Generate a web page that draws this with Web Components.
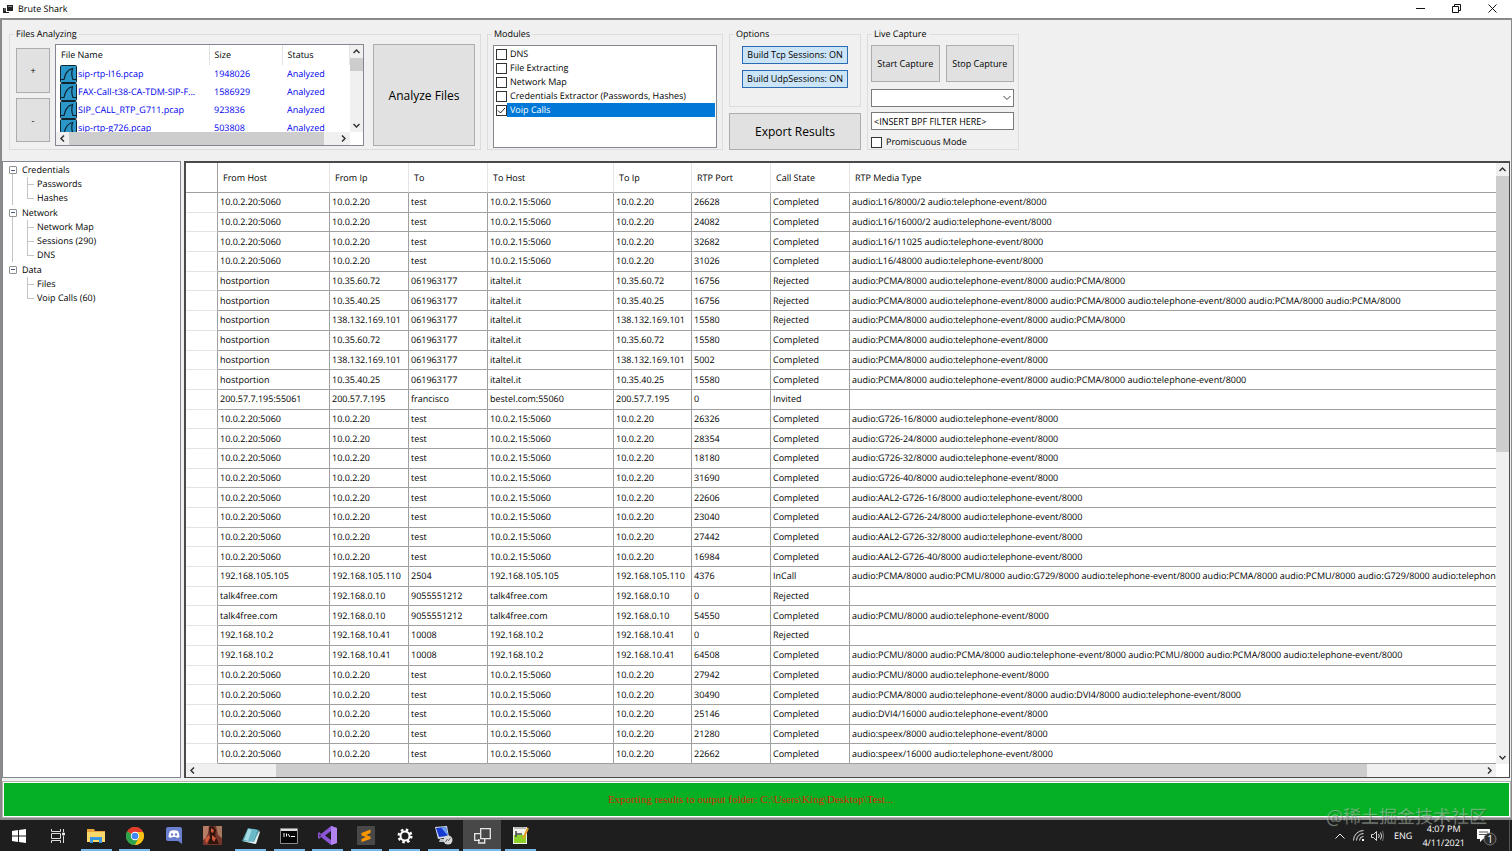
<!DOCTYPE html>
<html lang="en">
<head>
<meta charset="utf-8">
<title>Brute Shark</title>
<style>
  html, body { margin: 0; height: 100%; }
  body {
    font: 9px/14px "Open Sans", "Noto Sans", "Noto Sans CJK SC", sans-serif;
    color: #000; background: #fff; text-rendering: geometricPrecision;
  }
</style>
</head>
<body>
<bs-app></bs-app>
<script>
const base = `*, *::before, *::after { box-sizing: border-box; }
  button, input, select { font: inherit; color: inherit; margin: 0; border-radius: 0; }
  button { padding: 0; background: #e1e1e1; border: 1px solid #adadad; }
  input[type=checkbox] { appearance: none; flex: none; width: 11px; height: 11px; border: 1px solid #333; background: #fff; }
  input[type=checkbox]:checked { background: #fff url("data:image/svg+xml,%3Csvg xmlns='http://www.w3.org/2000/svg' viewBox='0 0 9 9'%3E%3Cpath d='M1 4.5 3.5 7 8 2' fill='none' stroke='%23222'/%3E%3C/svg%3E"); }`;

function define(name, markup, setup) {
  const template = document.createElement('template');
  template.innerHTML = markup.replace('<style>', '<style>' + base);
  customElements.define(name, class extends HTMLElement {
    constructor() {
      super();
      this.attachShadow({ mode: 'open' }).append(template.content.cloneNode(true));
    }
    connectedCallback() { if (setup && !this.ready) { this.ready = true; setup(this, this.shadowRoot); } }
  });
}

define('bs-title-bar', `<style>
  :host { display: flex; align-items: center; height: 18px; padding: 0 2px 0 3px; background: #fff; color: #000; }
  .name { margin-left: 5px; flex: 1; }
  button { width: 36px; height: 16px; border: 0; background: none; display: grid; place-items: center; }
  .buttons { display: flex; align-self: flex-start; }
</style>
<svg width="10" height="9" viewBox="0 0 10 9"><path d="M4 0h6v6H4z" fill="#222"/><path d="M0 3h3v4h3v1H0z" fill="#222"/><path d="M1 3h2v3H1z" fill="#555"/><path d="M5 1h4v1H5z" fill="#888"/></svg>
<span class="name">Brute Shark</span>
<div class="buttons">
<button aria-label="Minimize"><svg width="9" height="9"><path d="M0 4.5h9" stroke="#111"/></svg></button>
<button aria-label="Restore"><svg width="9" height="9" fill="none" stroke="#111"><path d="M.5 2.5h6v6h-6zM2.500 2.500V.5h6v6H6.500"/></svg></button>
<button aria-label="Close"><svg width="9" height="9" stroke="#111"><path d="M.5.5l8 8M8.500.5l-8 8"/></svg></button></div>`);

define('bs-group', `<style>
  :host { display: block; }
  fieldset { margin: 0; padding: 0; border: 1px solid #dcdcdc; min-width: 0; height: 100%; }
  legend { margin-left: 4px; padding: 0 2px; line-height: 14px; }
</style>
<fieldset><legend></legend><slot></slot></fieldset>`, (el, root) => {
  root.querySelector('legend').textContent = el.getAttribute('label');
});

define('bs-scrollbar', `<style>
  :host { display: flex; background: #f0f0f0; }
  :host([vertical]) { flex-direction: column; }
  button { flex: none; width: 13px; height: 13px; border: 0; background: none; display: grid; place-items: center; }
  .thumb { background: #cdcdcd; }
  .before, .thumb, .after { flex-basis: 0; }
</style>
<button aria-label="Back"><svg width="7" height="7" fill="none" stroke="#333" stroke-width="1.500"><path/></svg></button>
<span class="before"></span><span class="thumb"></span><span class="after"></span>
<button aria-label="Forward"><svg width="7" height="7" fill="none" stroke="#333" stroke-width="1.500"><path/></svg></button>`, (el, root) => {
  const start = +el.getAttribute('start'), size = +el.getAttribute('size');
  root.querySelector('.before').style.flexGrow = start;
  root.querySelector('.thumb').style.flexGrow = size;
  root.querySelector('.after').style.flexGrow = 100 - start - size;
  const shapes = el.hasAttribute('vertical') ? ['M.5 5 3.500 2 6.500 5', 'M.5 2 3.500 5 6.500 2'] : ['M5 .5 2 3.500 5 6.500', 'M2 .5 5 3.500 2 6.500'];
  root.querySelectorAll('path').forEach((p, i) => p.setAttribute('d', shapes[i]));
});

define('bs-file-list', `<style>
  :host { display: grid; grid-template: minmax(0, 1fr) 13px / minmax(0, 1fr) 13px; border: 1px solid #828790; background: #fff; }
  .view { overflow: hidden; }
  table { border-collapse: collapse; table-layout: fixed; width: 100%; color: #0000f0; }
  th, td { padding: 0 0 0 5px; text-align: left; font-weight: 400; white-space: nowrap; overflow: hidden; text-overflow: ellipsis; }
  th { height: 20px; color: #000; border-right: 1px solid #e3e3e3; }
  th:first-child { width: 153px; } th:nth-child(2) { width: 73px; }
  td { height: 18px; }
  td:first-child { padding-left: 4px; }
  .file { display: flex; align-items: center; gap: 1px; }
  .file span { overflow: hidden; text-overflow: ellipsis; }
  svg { flex: none; }
</style>
<div class="view"><table><thead><tr><th>File Name</th><th>Size</th><th>Status</th></tr></thead><tbody></tbody></table></div>
<bs-scrollbar vertical start="0" size="22"></bs-scrollbar>
<bs-scrollbar start="0" size="95"></bs-scrollbar>`, (el, root) => {
  const files = [['sip-rtp-l16.pcap', 1948026], ['FAX-Call-t38-CA-TDM-SIP-F...', 1586929], ['SIP_CALL_RTP_G711.pcap', 923836], ['sip-rtp-g726.pcap', 503808]];
  root.querySelector('tbody').innerHTML = files.map(([name, size]) => `<tr><td><div class="file"><svg width="17" height="18" viewBox="0 0 17 18"><rect x=".5" y=".5" width="16" height="17" rx="1" fill="#2b96c8" stroke="#12242e"/><path d="M1 14.500h3C5 9 8 4.500 12.500 3.500c-.8 3-.8 8 .5 11h3" fill="none" stroke="#0c2231" stroke-width="1.200"/></svg><span>${name}</span></div></td><td>${size}</td><td>Analyzed</td></tr>`).join('');
});

define('bs-modules', `<style>
  :host { display: block; padding: 1px 1px 1px 2px; border: 1px solid #828790; background: #fff; }
  label { display: flex; align-items: center; height: 14px; }
  span { flex: 1; padding-left: 3px; line-height: 14px; }
  :checked + span { background: #0078d7; color: #fff; }
</style>
<label><input type="checkbox"><span>DNS</span></label>
<label><input type="checkbox"><span>File Extracting</span></label>
<label><input type="checkbox"><span>Network Map</span></label>
<label><input type="checkbox"><span>Credentials Extractor (Passwords, Hashes)</span></label>
<label><input type="checkbox" checked><span>Voip Calls</span></label>`);

define('bs-live-capture', `<style>
  :host { display: block; padding: 4px 4px 0 3px; }
  .pair { display: grid; grid-template-columns: 1fr 1fr; gap: 6px; height: 37px; }
  select, input[type=text] { display: block; width: 100%; height: 18px; border: 1px solid #7a7a7a; background: #fff; padding: 0 2px; }
  .pick { position: relative; margin: 7px 0 5px; }
  .pick svg { position: absolute; right: 3px; top: 6px; }
  select { appearance: none; }
  label { display: flex; align-items: center; gap: 4px; margin-top: 5px; }
</style>
<div class="pair"><button>Start Capture</button><button>Stop Capture</button></div>
<div class="pick"><select aria-label="Network device"><option></option></select><svg width="8" height="6" fill="none" stroke="#444"><path d="M.5 1 4 4.500 7.500 1"/></svg></div>
<input type="text" aria-label="BPF filter" value="&lt;INSERT BPF FILTER HERE&gt;">
<label><input type="checkbox">Promiscuous Mode</label>`);

define('bs-toolbar', `<style>
  :host { display: flex; gap: 6px; padding: 7px; padding-bottom: 8px; background: #f0f0f0; }
  .files { width: 472px; } .modules { width: 236px; } .live { width: 152px; }
  .files-in { display: flex; padding: 3px 5px 3px 6px; height: 108px; }
  .edit { display: grid; gap: 5px; width: 34px; padding: 4px 0; margin-right: 5px; }
  bs-file-list { flex: 1; margin-right: 9px; min-width: 0; }
  .big { font-size: 12px; }
  .files-in .big { width: 102px; }
  .files-in button { padding-top: 2px; }
  bs-modules { margin: 4px 5px 1px; height: 103px; }
  .side { width: 132px; display: flex; flex-direction: column; gap: 6px; }
  .side bs-group { height: 80px; }
  .side .big { height: 37px; }
  .toggles { display: grid; gap: 6px; padding: 5px 12px 0; }
  .toggles button { height: 18px; background: #cce4f7; border-color: #2b6cb0; }
</style>
<bs-group class="files" label="Files Analyzing"><div class="files-in">
  <div class="edit"><button aria-label="Add file">+</button><button aria-label="Remove file">-</button></div>
  <bs-file-list></bs-file-list><button class="big">Analyze Files</button></div></bs-group>
<bs-group class="modules" label="Modules"><bs-modules></bs-modules></bs-group>
<div class="side"><bs-group label="Options"><div class="toggles"><button>Build Tcp Sessions: ON</button><button>Build UdpSessions: ON</button></div></bs-group>
  <button class="big">Export Results</button></div>
<bs-group class="live" label="Live Capture"><bs-live-capture></bs-live-capture></bs-group>`);

define('bs-tree', `<style>
  :host { display: block; padding: 1px 0 0 6px; border: 1px solid #828790; background: #fff; }
  ul { list-style: none; margin: 0; padding: 0; }
  .head { display: flex; align-items: center; height: 14px; gap: 5px; }
  .node + .node .head { height: 15px; }
  button { width: 8px; height: 8px; border: 1px solid #919191; border-radius: 1px; background: linear-gradient(#4a5a80, #4a5a80) center / 4px 1px no-repeat #fff; }
  .node { background: linear-gradient(#c4c4c4, #c4c4c4) 3px 8px / 1px 100% no-repeat; }
  .node:last-child { background: none; }
  .node ul { margin-left: 18px; }
  .leaf { height: 14px; padding-left: 10px;
    background: linear-gradient(#c4c4c4, #c4c4c4) 0 0 / 1px 100% no-repeat, linear-gradient(#c4c4c4, #c4c4c4) 0 7px / 7px 1px no-repeat; }
  .leaf:last-child { background-size: 1px 7px, 7px 1px; }
</style><ul class="root"></ul>`, (el, root) => {
  const tree = { Credentials: ['Passwords', 'Hashes'], Network: ['Network Map', 'Sessions (290)', 'DNS'], Data: ['Files', 'Voip Calls (60)'] };
  root.querySelector('.root').innerHTML = Object.entries(tree).map(([name, leaves]) =>
    `<li class="node"><div class="head"><button aria-label="Collapse ${name}"></button><span>${name}</span></div><ul>${leaves.map(l => `<li class="leaf">${l}</li>`).join('')}</ul></li>`).join('');
});

const T = ' audio:telephone-event/8000', A = 'audio:PCMA/8000', U = 'audio:PCMU/8000';
const local = (port, media) => ['10.0.2.20:5060', '10.0.2.20', 'test', '10.0.2.15:5060', '10.0.2.20', port, 'Completed', media + T];
const ital = (ip, port, state, media) => ['hostportion', ip, '061963177', 'italtel.it', ip, port, state, media];
const calls = [
  local(26628, 'audio:L16/8000/2'), local(24082, 'audio:L16/16000/2'), local(32682, 'audio:L16/11025'), local(31026, 'audio:L16/48000'),
  ital('10.35.60.72', 16756, 'Rejected', `${A}${T} ${A}`),
  ital('10.35.40.25', 16756, 'Rejected', `${A}${T} ${A}${T} ${A} ${A}`),
  ital('138.132.169.101', 15580, 'Rejected', `${A}${T} ${A}`),
  ital('10.35.60.72', 15580, 'Completed', A + T),
  ital('138.132.169.101', 5002, 'Completed', A + T),
  ital('10.35.40.25', 15580, 'Completed', `${A}${T} ${A}${T}`),
  ['200.57.7.195:55061', '200.57.7.195', 'francisco', 'bestel.com:55060', '200.57.7.195', 0, 'Invited', ''],
  local(26326, 'audio:G726-16/8000'), local(28354, 'audio:G726-24/8000'), local(18180, 'audio:G726-32/8000'), local(31690, 'audio:G726-40/8000'),
  local(22606, 'audio:AAL2-G726-16/8000'), local(23040, 'audio:AAL2-G726-24/8000'), local(27442, 'audio:AAL2-G726-32/8000'), local(16984, 'audio:AAL2-G726-40/8000'),
  ['192.168.105.105', '192.168.105.110', '2504', '192.168.105.105', '192.168.105.110', 4376, 'InCall', `${A} ${U} audio:G729/8000${T} ${A} ${U} audio:G729/8000${T}`],
  ['talk4free.com', '192.168.0.10', '9055551212', 'talk4free.com', '192.168.0.10', 0, 'Rejected', ''],
  ['talk4free.com', '192.168.0.10', '9055551212', 'talk4free.com', '192.168.0.10', 54550, 'Completed', U + T],
  ['192.168.10.2', '192.168.10.41', '10008', '192.168.10.2', '192.168.10.41', 0, 'Rejected', ''],
  ['192.168.10.2', '192.168.10.41', '10008', '192.168.10.2', '192.168.10.41', 64508, 'Completed', `${U} ${A}${T} ${U} ${A}${T}`],
  local(27942, U), local(30490, `${A}${T} audio:DVI4/8000`), local(25146, 'audio:DVI4/16000'), local(21280, 'audio:speex/8000'), local(22662, 'audio:speex/16000')
];

define('bs-grid', `<style>
  :host { display: grid; grid-template: minmax(0, 1fr) 13px / minmax(0, 1fr) 13px; border: 2px solid #4a4a4a; border-right-width: 1px; border-bottom-width: 1px; background: #fff; }
  .view { overflow: hidden; }
  table { width: 100%; height: 100%; table-layout: fixed; border-collapse: separate; border-spacing: 0; }
  th, td { padding: 0 0 0 2px; text-align: left; font-weight: 400; white-space: nowrap; overflow: hidden; border: solid #a0a0a0; border-width: 0 1px 1px 0; line-height: 14px; }
  thead tr { height: 30px; }
  thead th { padding-left: 5px; border-right-color: #e5e5e5; }
  tbody th { border-bottom-color: #e3e3e3; }
  tr > :first-child { border-right-color: #a0a0a0; }
  th:last-child, td:last-child { border-right: 0; }
  .mark { width: 32px; } .host { width: 112px; } .to-host { width: 126px; } .mid { width: 79px; } .to-ip { width: 78px; }
</style>
<div class="view"><table>
  <colgroup><col class="mark"><col class="host"><col class="mid"><col class="mid"><col class="to-host"><col class="to-ip"><col class="mid"><col class="mid"><col></colgroup>
  <thead><tr><th></th><th>From Host</th><th>From Ip</th><th>To</th><th>To Host</th><th>To Ip</th><th>RTP Port</th><th>Call State</th><th>RTP Media Type</th></tr></thead>
  <tbody></tbody></table></div>
<bs-scrollbar vertical start="0" size="48"></bs-scrollbar>
<bs-scrollbar start="6" size="85"></bs-scrollbar>`, (el, root) => {
  root.querySelector('tbody').innerHTML = calls.map(row => `<tr><th></th>${row.map(c => `<td>${c}</td>`).join('')}</tr>`).join('');
});

define('bs-status', `<style>
  :host { display: block; padding: 1px; border: 1px solid #b4b4b4; background: #fff; }
  div { height: 33px; padding-right: 12px; background: #06b025; color: #d42a08; font: 11px/33px "Liberation Serif", serif; text-align: center; text-rendering: auto; }
</style><div><slot></slot></div>`);

define('bs-taskbar', `<style>
  :host { display: flex; justify-content: space-between; height: 31px; background: #1e1e1e; color: #fff; }
  nav { display: grid; grid-template-columns: repeat(14, 1fr); flex: 0 1 540px; }
  nav button { display: grid; place-items: center; border: 0; background: none; padding: 0; }
  nav button.open { background: linear-gradient(#76b9ed, #76b9ed) center bottom / 31px 2px no-repeat; }
  nav button.active { background-color: #484848; background-size: 100% 2px; }
  .tray { display: flex; align-items: center; }
  .tray button { display: block; border: 0; background: none; }
  .tray svg { display: block; }
  .icons { display: flex; align-items: center; gap: 7px; }
  .lang { margin: 0 10px; }
  .clock { text-align: center; line-height: 14px; margin-right: 12px; }
  .clock span { display: block; }
  .desk { align-self: stretch; width: 3px; margin-left: 12px; border-left: 1px solid #555; }
</style>
<nav>
<button aria-label="Start"><svg width="14" height="14" fill="#fff"><path d="M0 2l6-1v5.500H0zM7 .9 14 0v6.500H7zM0 7.500h6V13l-6-1zM7 7.500h7V14l-7-1z"/></svg></button>
<button aria-label="Task view"><svg width="14" height="14" fill="none" stroke="#ddd"><path d="M.5 0v2.500h9V0M.5 14v-2.500h9V14M.5 4.500h9v5h-9zM12.500 0v3M12.500 7v7"/><path d="M11.500 4h2v2h-2z" fill="#fff"/></svg></button>
<button class="open" aria-label="File Explorer"><svg width="18" height="15"><path d="M0 1h7l1 2h10v11H0z" fill="#e8a33a"/><path d="M0 4h18v10H0z" fill="#ffd86b"/><path d="M3 9h12v6h-3v-3H6v3H3z" fill="#3a96dd"/></svg></button>
<button class="open" aria-label="Chrome"><svg width="18" height="18" viewBox="0 0 18 18"><circle cx="9" cy="9" r="9" fill="#fbc116"/><path d="M9 9 1.200 4.500A9 9 0 0 1 16.800 4.500z" fill="#e33b2e"/><path d="M9 9 1.200 4.500A9 9 0 0 0 9 18l4-7z" fill="#2da44e"/><path d="M9 5h7.900a9 9 0 0 1-7.900 13l3.500-7z" fill="#fbc116"/><circle cx="9" cy="9" r="4.200" fill="#fff"/><circle cx="9" cy="9" r="3.300" fill="#4285f4"/></svg></button>
<button aria-label="Discord"><svg width="16" height="17"><path d="M2 0h12a2 2 0 0 1 2 2v15l-4-3H2a2 2 0 0 1-2-2V2a2 2 0 0 1 2-2z" fill="#6b7fd0"/><path d="M4 4q4-1.500 8 0 1.500 3 1.500 6L11 11l-1-1H6l-1 1-2.500-1Q2.500 7 4 4z" fill="#fff"/><circle cx="6" cy="7.500" r="1.200" fill="#6b7fd0"/><circle cx="10" cy="7.500" r="1.200" fill="#6b7fd0"/></svg></button>
<button aria-label="Game"><svg width="19" height="19"><path d="M0 0h19v19H0z" fill="#74352a"/><path d="M0 0h6l-1 7-2 5-3 2z" fill="#b77c64"/><path d="M13 0h6v12l-4-3z" fill="#a8785f"/><path d="M6 1l4-1 3 4-1 5 4 9H5l2-8z" fill="#32140f"/><path d="M8 2l3 2-1 3-2-1zM9 9l4 3-2 4-2-3zM2 13l4-4 1 3-4 6z" fill="#d0593a"/></svg></button>
<button class="open" aria-label="Notepad"><svg width="18" height="18"><path d="M6 1l11 2-4 14L0 14z" fill="#4f9fb0"/><path d="M6 2l9 1-4 12-9-2z" fill="#a4dce3"/><path d="M10 2l5 1-4 12-5-1z" fill="#6bb9c8"/><path d="M0 14l12 1 5-11 1 1-4 12z" fill="#e7eff0"/></svg></button>
<button class="open" aria-label="Command Prompt"><svg width="18" height="16"><path d="M.5.500h17v15H.5z" fill="#050505" stroke="#8c8c8c"/><path d="M1 2h16" stroke="#ddd" stroke-width="2"/><path d="M3 6h2M3 8h2M6.500 5.500v3M8 6l2 3M11 8.500h4" stroke="#fff"/></svg></button>
<button class="open" aria-label="Visual Studio"><svg width="19" height="19"><path d="M13 0l6 2v15l-6 2L3 11l-2 2-1-1V7l1-1 2 2z" fill="#8b55d5"/><path d="M13 5v9L7 9.500zM1.500 8v3L3 9.500z" fill="#1e1e1e"/><path d="M13 0l6 2v15l-6 2z" fill="#b083ee"/></svg></button>
<button class="open" aria-label="Sublime Text"><svg width="18" height="19"><rect width="18" height="19" rx="1" fill="#484848"/><path d="M4.500 7l9-3.500v3.500L9 9l4.500 1.500v2.500l-9 3v-3L9 11 4.500 9.500z" fill="#ff9800"/></svg></button>
<button class="open" aria-label="Settings"><svg width="16" height="16"><circle cx="8" cy="8" r="6.300" fill="none" stroke="#fff" stroke-width="2.400" stroke-dasharray="2.475"/><circle cx="8" cy="8" r="4.500" fill="none" stroke="#fff" stroke-width="2"/></svg></button>
<button class="open" aria-label="Remote"><svg width="19" height="19"><path d="M1 1l12-1 2 11-11 2z" fill="#d5dce6"/><path d="M2 2l10-1 2 9-9 1z" fill="#173ad0"/><path d="M7 1.500l5-.5 2 9z" fill="#6f9ff0"/><path d="M6 13h6v3H5z" fill="#b8c0c8"/><circle cx="14" cy="14" r="4.500" fill="#d8d8d8"/><path d="M11.500 16l2-3M14 15l2.500-3" stroke="#666"/></svg></button>
<button class="open active" aria-label="Brute Shark"><svg width="17" height="16" fill="none" stroke="#e6e6e6" stroke-width="1.300"><path d="M6.700.7h9.600v10H6.700zM6 5.700H.7v6.600H6M4.700 11v4h6v-4"/></svg></button>
<button class="open" aria-label="Notepad++"><svg width="17" height="19"><path d="M1 1h14v17H1z" fill="#f2f2ea"/><path d="M2 9h12v8H2z" fill="#8ad12a"/><path d="M2 1h12v2H2z" fill="#bbb"/><path d="M4 5v6M4 8h6" stroke="#444" stroke-width="1.500"/><path d="M16 2l-5 11" stroke="#e4a12a" stroke-width="2"/></svg></button>
</nav>
<div class="tray"><div class="icons">
<button aria-label="Show hidden icons"><svg width="10" height="6" fill="none" stroke="#eee"><path d="M.5 5.500 5 1l4.500 4.500"/></svg></button>
<button aria-label="Network"><svg width="12" height="11" fill="none" stroke="#ddd"><path d="M1.500 10.500A10 10 0 0 1 11.500.5M4.500 10.500a7 7 0 0 1 7-7M7.500 10.500a4 4 0 0 1 4-4"/><path d="M10 9h2v2h-2z" fill="#fff" stroke="none"/></svg></button>
<button aria-label="Volume"><svg width="13" height="12" fill="none" stroke="#ddd"><path d="M.5 4.500h2l3-3v9l-3-3h-2zM7.500 4q1.500 2 0 4M9.500 2.500q2.500 3.500 0 7"/><path d="M11.500 1q2.500 5 0 10" stroke="#777"/></svg></button></div>
<span class="lang">ENG</span>
<time class="clock"><span>4:07 PM</span><span>4/11/2021</span></time>
<button aria-label="Notifications"><svg width="20" height="20"><path d="M0 3h13v10H6l-3 3v-3H0z" fill="#fff"/><path d="M2 6h9M2 8.500h9" stroke="#555"/><circle cx="13" cy="13" r="6" fill="#2c2c2c" stroke="#777"/><text x="13" y="17" text-anchor="middle" font-size="10" fill="#fff">1</text></svg></button>
<span class="desk"></span></div>`);

define('bs-app', `<style>
  :host { display: flex; flex-direction: column; min-height: 100vh; position: relative; }
  .window { flex: 1; display: flex; flex-direction: column; border: solid #8a8a8a; border-width: 2px 1px 2px 2px; background: #f0f0f0; min-width: 0; }
  main { flex: 1; display: grid; grid-template-columns: 179px minmax(0, 1fr); gap: 3px; margin-top: 3px; padding-right: 1px; }
  bs-status { margin-top: 3px; }
  .watermark { position: absolute; right: 25px; bottom: 21px; font: 18px/27px "Noto Sans CJK SC", sans-serif; color: rgba(190, 200, 190, .5); text-shadow: 1px 1px 0 rgba(40, 60, 40, .3); pointer-events: none; }
</style>
<bs-title-bar></bs-title-bar>
<div class="window">
  <bs-toolbar></bs-toolbar>
  <main><bs-tree></bs-tree><bs-grid></bs-grid></main>
  <bs-status>Exporting results to output folder: C:\\Users\\King\\Desktop\\Test...</bs-status>
</div>
<bs-taskbar></bs-taskbar>
<span class="watermark">@稀土掘金技术社区</span>`);
</script>
</body>
</html>
